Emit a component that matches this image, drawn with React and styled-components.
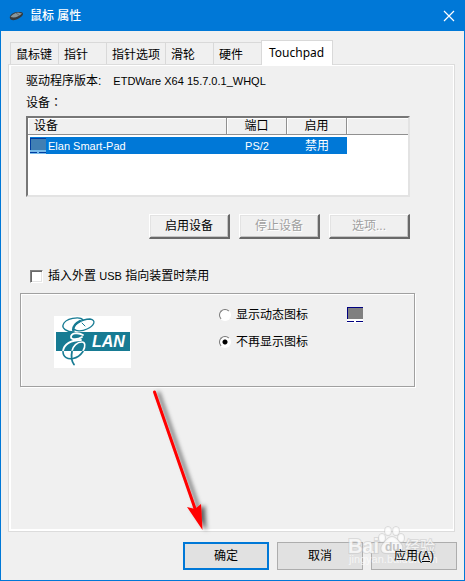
import React, { useState } from "react";
import styled, { createGlobalStyle } from "styled-components";

const GlobalStyle = createGlobalStyle`
  * {
    box-sizing: border-box;
  }

  body {
    margin: 0;
    background: #f0f0f0;
  }

  body,
  button,
  input,
  table {
    font-family: "Liberation Sans", "Noto Sans CJK SC", sans-serif;
    font-size: 12px;
    line-height: 16px;
    color: #000;
  }
`;

const Window = styled.div`
  position: relative;
  display: flex;
  flex-direction: column;
  min-height: 100vh;
  border: 1px solid #0078d7;
  border-top: 0;
  background: #f0f0f0;
`;

const TitleBar = styled.header`
  display: flex;
  align-items: center;
  height: 31px;
  padding: 0 8px;
  background: #0078d7;
  color: #fff;
`;

const Title = styled.h1`
  flex: 1;
  margin: 0 0 0 6px;
  font-size: 12px;
  font-weight: 500;
`;

const CloseButton = styled.button`
  display: flex;
  padding: 0;
  border: 0;
  background: none;
`;

const Content = styled.main`
  display: flex;
  flex: 1;
  flex-direction: column;
  padding: 9px 7px 10px;
`;

const TabList = styled.div`
  display: flex;
  align-items: flex-end;
  padding-left: 2px;
`;

const Tab = styled.button`
  min-width: 48px;
  height: ${({ $active }) => ($active ? "25px" : "22px")};
  margin-bottom: ${({ $active }) => ($active ? "-1px" : "0")};
  padding: ${({ $active }) => ($active ? "0 8px 1px 7px" : "2px 5px 0")};
  border: 1px solid #d9d9d9;
  border-bottom: 0;
  border-right-width: ${({ $active }) => ($active ? "1px" : "0")};
  background: ${({ $active }) => ($active ? "#fff" : "#f0f0f0")};
  text-align: left;
  white-space: nowrap;
  z-index: ${({ $active }) => ($active ? 1 : 0)};
  ${({ $latin }) => $latin && `font-family: "Noto Sans", sans-serif;`}
`;

const Panel = styled.section`
  flex: 1;
  margin-right: 2px;
  padding: 8px 44px 0 8px;
  border: 1px solid #dcdcdc;
  box-shadow: inset 2px 1px #fff, inset -1px -2px #fff;
`;

const InfoLine = styled.p`
  display: flex;
  gap: 12px;
  margin: 0 0 5px;
  padding-left: 9px;
`;

const Small = styled.span`
  font-size: 11px;
`;

const Colon = styled.span`
  font-family: "Noto Sans CJK TC", sans-serif;
`;

const DeviceLabel = styled.span`
  display: block;
`;

const ListBox = styled.div`
  height: 81px;
  margin: 5px 0 0 9px;
  border: 2px solid;
  border-color: #777 #e3e3e3 #e3e3e3 #777;
  background: #fff;
`;

const Table = styled.table`
  width: 100%;
  table-layout: fixed;
  border-collapse: separate;
  border-spacing: 0;
`;

const HeadCell = styled.th`
  width: ${({ $width }) => $width || "auto"};
  height: 17px;
  padding: 0 6px;
  border-right: ${({ $last }) => ($last ? "0" : "1px solid #909090")};
  border-bottom: 1px solid #909090;
  background: #f0f0f0;
  box-shadow: inset 1px 1px #fff;
  font-weight: 400;
  line-height: 16px;
  text-align: ${({ $align }) => $align || "left"};
`;

const Cell = styled.td`
  height: 19px;
  padding: 0;
  border-top: 2px solid #fff;
  border-left: ${({ $first }) => ($first ? "2px solid #fff" : "0")};
  background: #0078d7;
  background-clip: padding-box;
  color: #fff;
  text-align: ${({ $align }) => $align || "left"};
`;

const DeviceName = styled.span`
  display: flex;
  align-items: center;
  gap: 2px;
`;

const ActionRow = styled.div`
  display: flex;
  justify-content: flex-end;
  gap: 9px;
  margin-top: 17px;
`;

const ActionButton = styled.button`
  width: 81px;
  height: 25px;
  padding: 0;
  border: solid;
  border-width: 1px 2px 2px 1px;
  border-color: #fff #696969 #696969 #fff;
  background: #f0f0f0;
  box-shadow: inset 1px 1px #e3e3e3, inset -1px -1px #c4c4c4;

  &:disabled {
    color: #a0a0a0;
    text-shadow: 1px 1px #fff;
  }
`;

const CheckLabel = styled.label`
  display: flex;
  align-items: center;
  gap: 5px;
  margin: 29px 0 0 13px;
`;

const CheckBox = styled.input`
  appearance: none;
  width: 13px;
  height: 13px;
  margin: 0;
  border: 1px solid;
  border-color: #808080 #fff #fff #808080;
  background: #fff;
  box-shadow: inset 1px 1px #696969, inset -1px -1px #e3e3e3;

  &:checked {
    background: #404040 content-box;
    padding: 2px;
  }
`;

const GroupBox = styled.fieldset`
  display: flex;
  min-width: 0;
  height: 94px;
  margin: 9px -5px 0 3px;
  padding: 0;
  border: 1px solid #a0a0a0;
  box-shadow: 1px 1px #fff, inset 1px 1px #fff;
`;

const LogoBox = styled.div`
  width: 77px;
  height: 52px;
  margin: 22px 0 0 33px;
  background: #fff;
`;

const RadioList = styled.div`
  display: flex;
  flex-direction: column;
  gap: 11px;
  margin: 13px 0 0 88px;
`;

const RadioLabel = styled.label`
  display: flex;
  align-items: center;
  gap: 5px;
  white-space: nowrap;
`;

const Radio = styled.input`
  appearance: none;
  width: 12px;
  height: 12px;
  margin: 0;
  border: 1px solid;
  border-color: #777 #fff #fff #777;
  border-radius: 50%;
  background: #fff;

  &:checked {
    background: radial-gradient(circle, #000 2px, #fff 3px);
  }
`;

const TrayIcon = styled.div`
  margin: 13px 0 0 39px;
`;

const Footer = styled.footer`
  display: flex;
  justify-content: flex-end;
  gap: 8px;
  margin-top: 10px;
`;

const DialogButton = styled.button`
  width: 86px;
  height: 28px;
  padding: 0;
  border: ${({ $primary }) =>
    $primary ? "2px solid #0078d7" : "1px solid #adadad"};
  background: #e1e1e1;
`;

const ButtonText = styled.span`
  position: relative;
  z-index: 2;
`;

const Arrow = styled.svg`
  position: absolute;
  left: 147px;
  bottom: 44px;
  pointer-events: none;
`;

const Watermark = styled.div`
  position: absolute;
  right: 26px;
  bottom: 5px;
  z-index: 1;
  pointer-events: none;
`;

const tabs = ["鼠标键", "指针", "指针选项", "滑轮", "硬件", "Touchpad"];

const MouseIcon = () => (
  <svg width="15" height="12" viewBox="0 0 15 12" aria-hidden="true">
    <path d="M1 8.500C0 6 3 3 7 2.300c3-.6 6.500-.5 7 1.200.5 2-3 4.800-6.500 6C4.500 10.500 1.800 10.400 1 8.500z" fill="#33393d" />
    <path d="M1.500 7C3 4.500 6 3 9 2.600l4 .9C10 6.500 6 8.400 1.500 7z" fill="#88969c" />
    <path d="M7 3l3 2.200" stroke="#4c5860" strokeWidth=".7" />
  </svg>
);

const PadIcon = ({ selected }) => (
  <svg width="16" height="16" viewBox="0 0 16 16" aria-hidden="true">
    <rect width="16" height="16" fill={selected ? "#78bbeb" : "#fff"} />
    <rect width="16" height="12" fill={selected ? "#003c9f" : "#000080"} />
    <rect x="1" y="1" width="15" height="11" fill={selected ? "#407fb3" : "#808080"} />
    <path d="M0 14.500h7M9 14.500h7" stroke={selected ? "#003c9f" : "#000080"} />
  </svg>
);

const ElanLogo = () => (
  <svg width="77" height="52" viewBox="0 0 77 52" role="img" aria-label="ELAN">
    <path d="M2 16h74v19H2z" fill="#177b93" />
    <g fill="none" strokeLinecap="round">
      <path d="M20 16C12 16 8 12 9 9 11 2 26 0 29 4" stroke="#177b93" strokeWidth="1.300" />
      <path d="M20 15C18 9 28 3 36 3c7 1 4 7-3 10-6 3-11 2-13 0" stroke="#177b93" strokeWidth="1.300" />
      <path d="M19 14c0-4 3-7 7-9" stroke="#177b93" strokeWidth="2.200" />
      <path d="M28 7l3 3" stroke="#177b93" />
      <path d="M29 19c-5-3-12-2-12 2 0 3 7 3 11 0" stroke="#fff" strokeWidth="1.800" />
      <path d="M27 24C17 24 10 28 9 35" stroke="#fff" strokeWidth="1.800" />
      <path d="M29 35c3-5 2-9-1-9-5 0-9 4-10 9" stroke="#fff" strokeWidth="1.600" />
      <path d="M9 35.500c0 6 5 8 10 7 5-1 8-4 10-7" stroke="#177b93" strokeWidth="1.600" />
      <path d="M18 35.500c-1 5-1 9 2 13" stroke="#177b93" strokeWidth="1.800" />
    </g>
    <text x="38" y="31" fill="#fff" fontFamily="Liberation Sans, sans-serif" fontSize="16" fontWeight="700" fontStyle="italic">
      LAN
    </text>
  </svg>
);

const BaiduMark = () => (
  <svg width="90" height="46" viewBox="0 0 90 46" aria-hidden="true">
    <g fill="#fff" fillOpacity=".75" stroke="#c4c4c4" strokeOpacity=".5" strokeWidth="2" paintOrder="stroke">
      <text x="0" y="28" fontFamily="Liberation Sans, sans-serif" fontWeight="700" fontSize="20">
        Bai
      </text>
      <ellipse cx="34" cy="13" rx="3" ry="4" />
      <ellipse cx="40" cy="6" rx="3" ry="4" />
      <ellipse cx="48" cy="6" rx="3" ry="4" />
      <ellipse cx="53" cy="13" rx="3" ry="4" />
      <path d="M44 12c4 0 6 4 9 7 3 4 1 9-4 9H38c-5 0-6-5-3-9 3-3 5-7 9-7z" />
      <text x="57" y="27" fontFamily="Noto Sans CJK SC, sans-serif" fontSize="15">
        经验
      </text>
    </g>
    <text x="37" y="26" fill="#c4c4c4" fontFamily="Liberation Sans, sans-serif" fontWeight="700" fontSize="12">
      du
    </text>
    <text x="1" y="38" fill="#fff" fillOpacity=".7" fontFamily="Liberation Sans, sans-serif" fontSize="11">
      jingyan.baidu.com
    </text>
  </svg>
);

const App = () => {
  const [active, setActive] = useState("Touchpad");
  const [iconMode, setIconMode] = useState("hide");

  return (
    <>
      <GlobalStyle />
      <Window>
        <TitleBar>
          <MouseIcon />
          <Title>鼠标 属性</Title>
          <CloseButton aria-label="关闭">
            <svg width="14" height="12" viewBox="0 0 14 12">
              <path d="M2 1l10 10M12 1L2 11" stroke="#fff" strokeWidth="1.200" />
            </svg>
          </CloseButton>
        </TitleBar>
        <Content>
          <TabList role="tablist">
            {tabs.map((tab) => (
              <Tab
                key={tab}
                role="tab"
                aria-selected={tab === active}
                $active={tab === active}
                $latin={tab === "Touchpad"}
                onClick={() => setActive(tab)}
              >
                {tab}
              </Tab>
            ))}
          </TabList>
          <Panel>
            <InfoLine>
              <span>驱动程序版本:</span>
              <Small>ETDWare X64 15.7.0.1_WHQL</Small>
            </InfoLine>
            <InfoLine>
              <DeviceLabel>
                设备<Colon>：</Colon>
              </DeviceLabel>
            </InfoLine>
            <ListBox>
              <Table>
                <thead>
                  <tr>
                    <HeadCell>设备</HeadCell>
                    <HeadCell $width="60px" $align="center">端口</HeadCell>
                    <HeadCell $width="60px" $align="center">启用</HeadCell>
                    <HeadCell $width="61px" $last />
                  </tr>
                </thead>
                <tbody>
                  <tr>
                    <Cell $first>
                      <DeviceName>
                        <PadIcon selected />
                        <Small>Elan Smart-Pad</Small>
                      </DeviceName>
                    </Cell>
                    <Cell $align="center">
                      <Small>PS/2</Small>
                    </Cell>
                    <Cell $align="center">禁用</Cell>
                  </tr>
                </tbody>
              </Table>
            </ListBox>
            <ActionRow>
              <ActionButton>启用设备</ActionButton>
              <ActionButton disabled>停止设备</ActionButton>
              <ActionButton disabled>选项...</ActionButton>
            </ActionRow>
            <CheckLabel>
              <CheckBox type="checkbox" />
              <span>
                插入外置 <Small>USB</Small> 指向装置时禁用
              </span>
            </CheckLabel>
            <GroupBox>
              <LogoBox>
                <ElanLogo />
              </LogoBox>
              <RadioList>
                <RadioLabel>
                  <Radio
                    type="radio"
                    name="icon"
                    checked={iconMode === "show"}
                    onChange={() => setIconMode("show")}
                  />
                  显示动态图标
                </RadioLabel>
                <RadioLabel>
                  <Radio
                    type="radio"
                    name="icon"
                    checked={iconMode === "hide"}
                    onChange={() => setIconMode("hide")}
                  />
                  不再显示图标
                </RadioLabel>
              </RadioList>
              <TrayIcon>
                <PadIcon />
              </TrayIcon>
            </GroupBox>
          </Panel>
          <Footer>
            <DialogButton $primary>确定</DialogButton>
            <DialogButton>取消</DialogButton>
            <DialogButton>
              <ButtonText>
                应用(<u>A</u>)
              </ButtonText>
            </DialogButton>
          </Footer>
        </Content>
        <Arrow width="70" height="150" viewBox="0 0 70 150" aria-hidden="true">
          <defs>
            <filter id="shadow" x="-30%" y="-10%" width="180%" height="130%">
              <feDropShadow dx="4" dy="1" stdDeviation="2" floodColor="#000" floodOpacity=".6" />
            </filter>
          </defs>
          <g filter="url(#shadow)">
            <path d="M6.500 6l41 118" stroke="#f00" strokeWidth="3" strokeLinecap="round" />
            <path d="M54.500 144L39 121l8 2 6-5z" fill="#f00" />
          </g>
        </Arrow>
        <Watermark>
          <BaiduMark />
        </Watermark>
      </Window>
    </>
  );
};

export default App;
